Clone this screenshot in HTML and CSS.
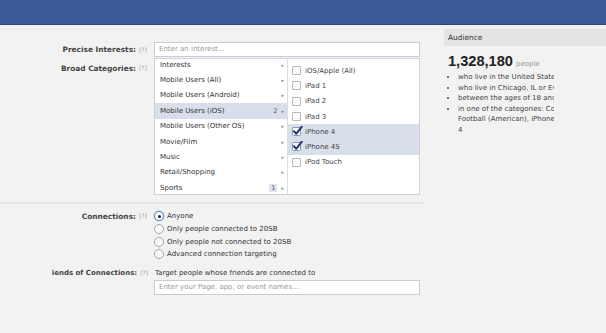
FILE: index.html
```html
<!DOCTYPE html>
<html>
<head>
<meta charset="utf-8">
<link rel="stylesheet" href="styles.css">
</head>
<body>
<div class="topbar"></div>
<div class="main">
  <div class="form">
    <div class="row precise">
      <div class="label"><span class="ltext">Precise Interests:</span><span class="help">[?]</span></div>
      <div class="field"><div class="input">Enter an interest...</div></div>
    </div>
    <div class="row broad">
      <div class="label top"><span class="ltext">Broad Categories:</span><span class="help">[?]</span></div>
      <div class="field">
        <div class="catbox">
          <div class="col left">
            <div class="list">
              <div class="cat"><span class="name">Interests</span><span class="arrow">▸</span></div>
              <div class="cat"><span class="name">Mobile Users (All)</span><span class="arrow">▸</span></div>
              <div class="cat"><span class="name">Mobile Users (Android)</span><span class="arrow">▸</span></div>
              <div class="cat sel"><span class="name">Mobile Users (iOS)</span><span class="count">2</span><span class="arrow">▸</span></div>
              <div class="cat"><span class="name">Mobile Users (Other OS)</span><span class="arrow">▸</span></div>
              <div class="cat"><span class="name">Movie/Film</span><span class="arrow">▸</span></div>
              <div class="cat"><span class="name">Music</span><span class="arrow">▸</span></div>
              <div class="cat"><span class="name">Retail/Shopping</span><span class="arrow">▸</span></div>
              <div class="cat"><span class="name">Sports</span><span class="count badge">1</span><span class="arrow">▸</span></div>
            </div>
          </div>
          <div class="col right">
            <div class="opt"><span class="cb"></span><span>iOS/Apple (All)</span></div>
            <div class="opt"><span class="cb"></span><span>iPad 1</span></div>
            <div class="opt"><span class="cb"></span><span>iPad 2</span></div>
            <div class="opt"><span class="cb"></span><span>iPad 3</span></div>
            <div class="opt on"><svg class="cbx" width="11" height="10" viewBox="0 0 11 10"><rect x="0.5" y="1.5" width="8" height="8" rx="1" fill="#fff" stroke="#8a94a8"/><path d="M2 5.2 L4.2 7.8 L9.8 0.6" fill="none" stroke="#1c3470" stroke-width="2" stroke-linecap="round" stroke-linejoin="round"/></svg><span>iPhone 4</span></div>
            <div class="opt on"><svg class="cbx" width="11" height="10" viewBox="0 0 11 10"><rect x="0.5" y="1.5" width="8" height="8" rx="1" fill="#fff" stroke="#8a94a8"/><path d="M2 5.2 L4.2 7.8 L9.8 0.6" fill="none" stroke="#1c3470" stroke-width="2" stroke-linecap="round" stroke-linejoin="round"/></svg><span>iPhone 4S</span></div>
            <div class="opt"><span class="cb"></span><span>iPod Touch</span></div>
          </div>
        </div>
      </div>
    </div>
    <div class="sep"></div>
    <div class="row conn">
      <div class="label top"><span class="ltext">Connections:</span><span class="help">[?]</span></div>
      <div class="field radios">
        <div class="radio"><span class="rb checked"></span><span>Anyone</span></div>
        <div class="radio"><span class="rb"></span><span>Only people connected to 20SB</span></div>
        <div class="radio"><span class="rb"></span><span>Only people not connected to 20SB</span></div>
        <div class="radio"><span class="rb"></span><span>Advanced connection targeting</span></div>
      </div>
    </div>
    <div class="row friends">
      <div class="label top"><span class="ltext">Friends of Connections:</span><span class="help">[?]</span></div>
      <div class="field">
        <div class="ftext">Target people whose friends are connected to</div>
        <div class="input">Enter your Page, app, or event names...</div>
      </div>
    </div>
  </div>
  <div class="side">
    <div class="shead">Audience</div>
    <div class="count-line"><span class="big">1,328,180</span><span class="people">people</span></div>
    <div class="summary">
      <ul class="bullets">
        <li>who live in the United States</li>
        <li>who live in Chicago, IL or Evanston, IL</li>
        <li>between the ages of 18 and 35</li>
        <li>in one of the categories: Cooking, Sports,<br>Football (American), iPhone 4S or iPhone<br>4</li>
      </ul>
    </div>
  </div>
</div>
</body>
</html>
```

FILE: styles.css
```css
html, body {
  margin: 0;
  padding: 0;
  width: 606px;
  height: 333px;
  overflow: hidden;
  background: #f2f2f2;
  font-family: "DejaVu Sans", "Liberation Sans", sans-serif;
  font-size: 7px;
  color: #333;
}
.topbar {
  height: 24px;
  background: #3b5998;
  border-bottom: 1px solid #2c4683;
}
.main {
  display: flex;
  align-items: flex-start;
}
.form {
  width: 424px;
  flex-shrink: 0;
  padding-top: 17px;
}
.row {
  display: grid;
  grid-template-columns: 96px 266px;
  column-gap: 6px;
  margin-left: 52px;
}
.label {
  display: flex;
  justify-content: flex-end;
  align-items: center;
  overflow: hidden;
  white-space: nowrap;
}
.label.top {
  align-items: flex-start;
}
.ltext {
  font-weight: bold;
  font-size: 7.4px;
  color: #444;
}
.friends .ltext {
  font-size: 7px;
}
.help {
  font-size: 6px;
  color: #a0a0a0;
  margin-left: 3px;
  width: 9px;
}
.input {
  height: 13px;
  line-height: 13px;
  border: 1px solid #c8ccd4;
  background: #fff;
  color: #9a9a9a;
  padding-left: 4px;
}
.broad {
  margin-top: 1px;
}
.broad .label {
  padding-top: 6px;
}
.catbox {
  display: flex;
  height: 135px;
  border: 1px solid #cdd1d8;
  background: #fff;
}
.col {
  overflow: hidden;
}
.col.left {
  width: 132px;
  border-right: 1px solid #dadde3;
}
.col.right {
  flex: 1;
  padding-top: 4px;
}
.list {
  margin-top: -2px;
}
.cat {
  height: 15.4px;
  display: flex;
  align-items: center;
  padding-left: 5px;
  padding-right: 3px;
}
.cat .name {
  flex: 1;
}
.cat.sel, .opt.on {
  background: #d8dfea;
}
.count {
  font-size: 6.5px;
  color: #555;
  padding: 0 2px;
  margin-right: 2px;
}
.count.badge {
  background: #dde3ee;
  border-radius: 1px;
  margin-right: 4px;
}
.arrow {
  font-size: 5px;
  color: #888;
}
.opt {
  height: 15.3px;
  display: flex;
  align-items: center;
  padding-left: 4px;
  color: #444;
}
.cb {
  width: 7px;
  height: 7px;
  border: 1px solid #b4b8c0;
  border-radius: 1px;
  background: #fbfbfb;
  margin-right: 4px;
}
.cbx {
  margin-right: 2px;
  margin-top: -2px;
}
.sep {
  height: 2px;
  background: #e6e6e6;
  margin-top: 7px;
}
.conn {
  margin-top: 6px;
}
.conn .label {
  padding-top: 2px;
}
.radio {
  height: 12.7px;
  display: flex;
  align-items: center;
}
.rb {
  width: 8px;
  height: 8px;
  border: 1px solid #a8a8a8;
  border-radius: 50%;
  background: #fafafa;
  margin-right: 3px;
  box-sizing: content-box;
  display: flex;
  align-items: center;
  justify-content: center;
}
.rb.checked {
  border-color: #5b87c9;
  box-shadow: 0 0 1.5px #6d9be0;
  background: #fff;
}
.rb.checked::after {
  content: "";
  width: 3px;
  height: 3px;
  border-radius: 50%;
  background: #222;
}
.friends {
  margin-top: 6px;
}
.friends .label {
  padding-top: 2px;
}
.ftext {
  height: 12px;
  line-height: 12px;
  padding-left: 1px;
  margin-bottom: 1px;
}
.side {
  margin-left: 20px;
  width: 162px;
  flex-shrink: 0;
  padding-top: 4px;
}
.shead {
  height: 17px;
  line-height: 17px;
  background: #e4e4e4;
  padding-left: 4px;
  font-size: 7.4px;
  color: #333;
}
.count-line {
  margin-top: 6px;
  height: 18px;
  line-height: 18px;
  padding-left: 4px;
}
.big {
  font-family: "Liberation Sans", Arial, sans-serif;
  font-weight: bold;
  font-size: 14.6px;
  color: #222;
}
.people {
  font-size: 7px;
  color: #999;
  margin-left: 3px;
}
.summary {
  width: 110px;
  overflow: hidden;
  margin-top: 2px;
}
.bullets {
  width: 220px;
  margin: 0;
  padding-left: 14px;
  line-height: 10.6px;
  font-size: 7px;
  color: #444;
}
```
